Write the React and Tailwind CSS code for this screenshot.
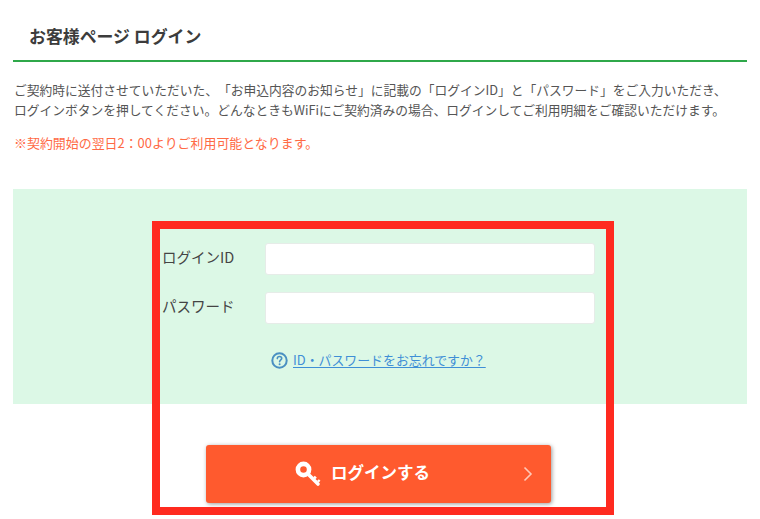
import React from 'react';

const KeyIcon = () => (
  <svg width="26" height="26" viewBox="0 0 26 26" fill="none" className="shrink-0">
    <circle cx="8.5" cy="8.5" r="5.6" stroke="#fff" strokeWidth="4.6" />
    <path d="M13 13 L23 23" stroke="#fff" strokeWidth="3.6" strokeLinecap="round" />
    <path d="M19 15.5 L21 17.5 M23 19 L24.6 20.6" stroke="#fff" strokeWidth="2.4" />
  </svg>
);

const QuestionIcon = () => (
  <svg width="17" height="17" viewBox="0 0 17 17" fill="none" className="shrink-0">
    <circle cx="8.5" cy="8.5" r="7.2" stroke="#4a90c2" strokeWidth="2" />
    <path d="M6.3 6.6 C6.3 5.2 7.3 4.5 8.5 4.5 C9.8 4.5 10.7 5.3 10.7 6.4 C10.7 7.8 8.6 8 8.6 9.8" stroke="#4a90c2" strokeWidth="1.6" strokeLinecap="round" />
    <circle cx="8.6" cy="12.2" r="1" fill="#4a90c2" />
  </svg>
);

const Field = ({ label, type }) => (
  <div className="flex items-center">
    <label className="w-[103px] text-[14.5px] text-[#444] -mt-[4px]">{label}</label>
    <input type={type} className="w-[330px] h-8 bg-white rounded-[3px] border border-[#e6ece8] outline-none" />
  </div>
);

export default function App() {
  return (
    <div className="relative h-[519px] overflow-hidden bg-white px-[13px] font-['Noto_Sans_CJK_JP','Noto_Sans',sans-serif] [text-spacing-trim:space-all]">
      <h1 className="h-[62px] pl-4 pt-[23px] text-[16.9px] leading-[26px] font-bold text-[#3c3c3c] border-b-2 border-[#2fa84a]">
        お客様ページ ログイン
      </h1>

      <p className="mt-[18px] pl-px text-[12.75px] leading-5 text-[#555] whitespace-nowrap">
        ご契約時に送付させていただいた、「お申込内容のお知らせ」に記載の「ログインID」と「パスワード」をご入力いただき、
        <br />
        ログインボタンを押してください。どんなときもWiFiにご契約済みの場合、ログインしてご利用明細をご確認いただけます。
      </p>
      <p className="mt-[13px] pl-px text-[12.95px] leading-5 text-[#ff6a45]">
        ※契約開始の翌日2：00よりご利用可能となります。
      </p>

      <div className="mt-[36px] h-[215px] bg-[#dcf8e6] pl-[149px] pt-[54px]">
        <div className="flex flex-col gap-[17px]">
          <Field label="ログインID" type="text" />
          <Field label="パスワード" type="password" />
        </div>
        <div className="mt-[27px] ml-[109px] flex items-center gap-[5px]">
          <QuestionIcon />
          <a href="#" className="text-[12.9px] leading-[18px] text-[#3f8fd6] underline underline-offset-2">
            ID・パスワードをお忘れですか？
          </a>
        </div>
      </div>

      <button className="relative mt-[41px] ml-[193px] flex h-[58px] w-[345px] items-center justify-center gap-[10px] rounded-[3px] bg-[#ff5a2e] pr-[32px] text-[16.5px] font-bold text-white shadow-[1px_1px_4px_rgba(0,0,0,0.4)]">
        <KeyIcon />
        <span className="-mt-1">ログインする</span>
        <svg width="10" height="16" viewBox="0 0 10 16" fill="none" className="absolute right-[18px] top-[21px]">
          <path d="M1.5 1.5 L8 8 L1.5 14.5" stroke="#ffc9b8" strokeWidth="1.6" />
        </svg>
      </button>

      {/* red annotation box drawn over the form */}
      <div className="absolute left-[152px] top-[221px] h-[294px] w-[462px] border-8 border-[#ff2a1f] pointer-events-none" />
    </div>
  );
}
